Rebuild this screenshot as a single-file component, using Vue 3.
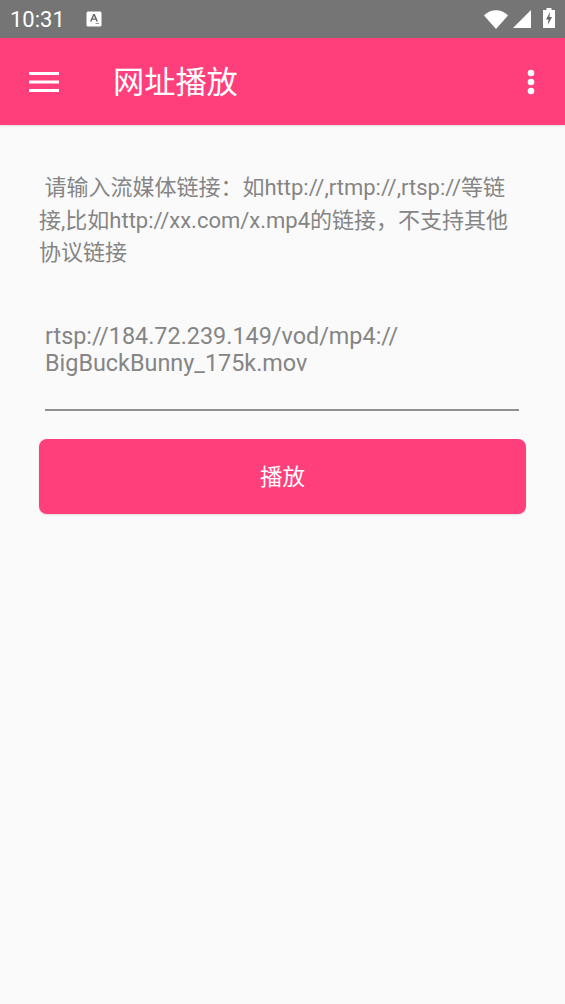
<script setup>
const description = ' 请输入流媒体链接：如http://,rtmp://,rtsp://等链接,比如http://xx.com/x.mp4的链接，不支持其他协议链接'
const url = 'rtsp://184.72.239.149/vod/mp4://\nBigBuckBunny_175k.mov'
</script>

<template>
	<div class="screen">
		<div class="statusbar">
			<span class="time">10:31</span>
			<svg class="notif" viewBox="0 0 16 16" width="16" height="16">
				<rect x="0.5" y="0.5" width="15" height="15" rx="1.5" fill="#fff" />
				<path d="M4 10.5 L7.2 3 H8.8 L12 10.5 H10.4 L9.7 8.8 H6.3 L5.6 10.5 Z M6.9 7.5 H9.1 L8 4.8 Z" fill="#666" />
				<path d="M9.5 12.5 H13" stroke="#999" stroke-width="1" />
			</svg>
			<div class="status-right">
				<svg class="wifi" viewBox="0 0 24 19" width="24" height="19">
					<path d="M0 5.5 C6.5 -1.6 17.5 -1.6 24 5.5 L12 19 Z" fill="#fff" />
				</svg>
				<svg class="signal" viewBox="0 0 18 18" width="18" height="18">
					<path d="M0 18 L18 0 V18 Z" fill="#fff" />
				</svg>
				<svg class="battery" viewBox="0 0 12 20" width="12" height="20">
					<path d="M3.5 0 H8.5 V2 H12 V20 H0 V2 H3.5 Z" fill="#fff" />
					<path d="M7 4 L3 11.5 H5.5 L4.8 17 L9 9 H6.4 Z" fill="#666" />
				</svg>
			</div>
		</div>

		<div class="toolbar">
			<svg class="menu" viewBox="0 0 30 20" width="30" height="20">
				<path d="M0 1.5 H30 M0 10 H30 M0 18.5 H30" stroke="#fff" stroke-width="3" fill="none" />
			</svg>
			<h1 class="title">网址播放</h1>
			<svg class="more" viewBox="0 0 8 26" width="8" height="26">
				<circle cx="4" cy="4" r="3.3" fill="#fff" />
				<circle cx="4" cy="13" r="3.3" fill="#fff" />
				<circle cx="4" cy="22" r="3.3" fill="#fff" />
			</svg>
		</div>

		<div class="content">
			<p class="desc">{{ description }}</p>
			<div class="input">{{ url }}</div>
			<button class="play">播放</button>
		</div>
	</div>
</template>

<style scoped>
	.screen {
		display: flex;
		flex-direction: column;
		height: 1004px;
		background: #fafafa;
		font-family: Roboto, "Noto Sans CJK SC", sans-serif;
	}
	.statusbar {
		display: flex;
		align-items: center;
		height: 38px;
		flex: none;
		padding: 0 10px;
		box-sizing: border-box;
		background: #757575;
		color: #fff;
	}
	.time {
		font-size: 22px;
		width: 76px;
	}
	.status-right {
		display: flex;
		align-items: center;
		margin-left: auto;
	}
	.signal {
		margin-left: 5px;
	}
	.battery {
		margin: 0 0 2px 12px;
	}
	.toolbar {
		display: flex;
		align-items: center;
		height: 87px;
		flex: none;
		padding: 0 30px 0 29px;
		box-sizing: border-box;
		background: #ff3f7c;
		box-shadow: 0 1px 2px rgba(0,0,0,.12);
	}
	.title {
		margin: 0 0 4px 54px;
		color: #fff;
		font-size: 31.2px;
		font-weight: 400;
	}
	.more {
		margin-left: auto;
	}
	.content {
		display: flex;
		flex-direction: column;
		padding: 47px 39px 0 39px;
	}
	.desc {
		margin: 0;
		padding-right: 1px;
		color: #858585;
		font-size: 22px;
		line-height: 32.5px;
		white-space: pre-wrap;
	}
	.input {
		margin: 53px 7px 0 6px;
		padding: 0 1px 32px 0;
		border-bottom: 2px solid #909090;
		color: #858585;
		font-size: 23.4px;
		line-height: 27px;
		white-space: pre-line;
	}
	.play {
		height: 75px;
		margin-top: 28px;
		border: none;
		border-radius: 8px;
		background: #ff3f7c;
		box-shadow: 0 1px 2px rgba(0,0,0,.12);
		color: #fff;
		font-family: inherit;
		font-size: 22.5px;
		padding-bottom: 4px;
	}
</style>
